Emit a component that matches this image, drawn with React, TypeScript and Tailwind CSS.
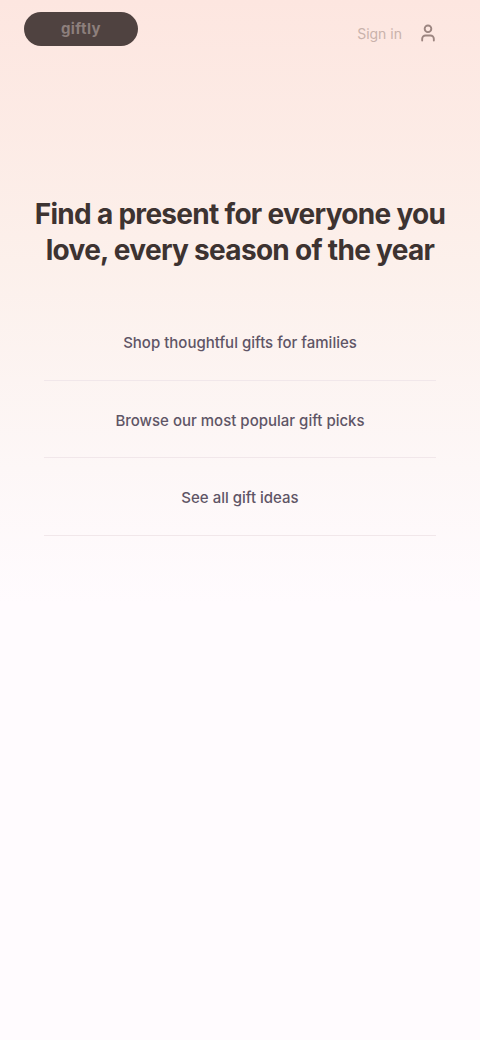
import { User } from 'lucide-react'

const links = [
  'Shop thoughtful gifts for families',
  'Browse our most popular gift picks',
  'See all gift ideas',
]

export default function App() {
  return (
    <div
      className="min-h-[1040px] w-full bg-[linear-gradient(180deg,#fde6e0_0%,#fcf0eb_25%,#fdf7f7_45%,#fffbfe_58%,#fffbfe_100%)]"
      style={{ fontFamily: '"Inter", "Liberation Sans", sans-serif' }}
    >
      <header className="flex items-center justify-between px-6 pt-3">
        <div className="flex h-[34px] w-[114px] items-center justify-center rounded-full bg-[#4f4240] text-[15px] font-bold tracking-wide text-[#8d7f7c]">
          giftly
        </div>
        <div className="mt-2 flex items-center gap-4 pr-[18px]">
          <span className="text-[14px] text-[#c9b2ab]">Sign in</span>
          <User className="h-5 w-5 text-[#9c8580]" strokeWidth={2.25} />
        </div>
      </header>

      <main className="px-4 pt-[150px]">
        <h1 className="text-center text-[28px] font-bold leading-[36px] tracking-tight whitespace-nowrap text-[#3d3331]">
          Find a present for everyone you
          <br />
          love, every season of the year
        </h1>

        <ul className="mx-2 mt-[35px] flex flex-col">
          {links.map((l) => (
            <li
              key={l}
              className="mx-5 flex flex-col items-center border-b border-[#f1e7ea] pt-[29px] pb-[25px]"
            >
              <a className="text-[15px] font-medium text-[#5f5566]">{l}</a>
            </li>
          ))}
        </ul>
      </main>
    </div>
  )
}
